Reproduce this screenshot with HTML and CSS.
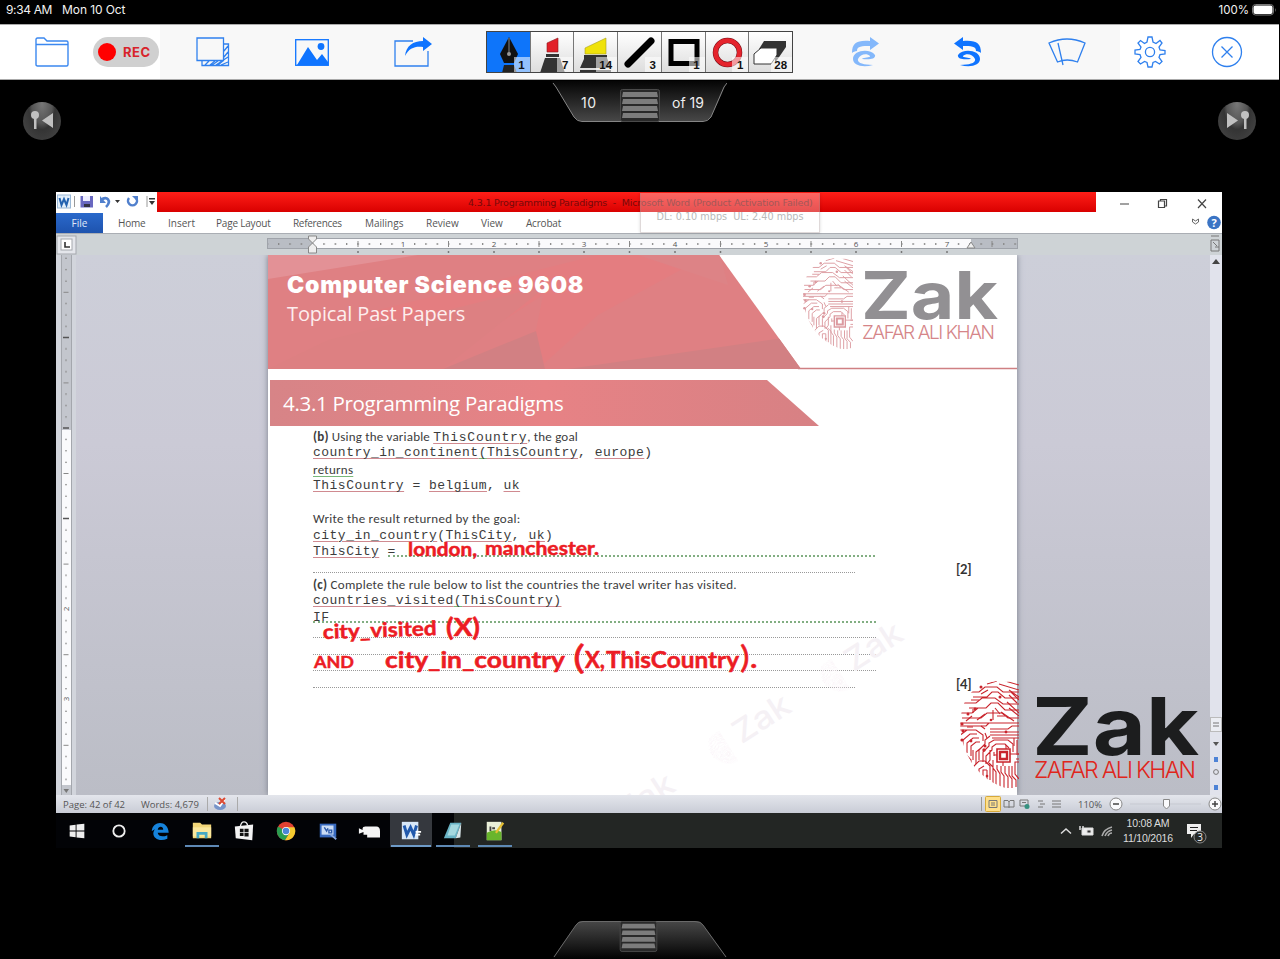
FILE: index.html
```html
<!DOCTYPE html>
<html lang="en">
<head>
<meta charset="utf-8">
<title>Whiteboard</title>
<link rel="stylesheet" href="styles.css">
</head>
<body>
<svg class="defs" width="0" height="0" aria-hidden="true">
  <defs>
    <clipPath id="half"><path d="M60 0 V110 C40 110 20 96 11 80 C2 63 -2 45 4 27 C9 8 30 -2 47 2 Z"/></clipPath>
    <symbol id="print" viewBox="0 0 60 110">
      <g clip-path="url(#half)" fill="none" stroke="currentColor" stroke-width="1.100">
        <path d="M8 12H20L26 7H38L44 12H60M14 17H28L33 12H39L46 18H60M4 23H17L23 18H36L44 24H60M10 28H27L32 23H39L46 30H60M28 4L38 1M40 4L60 10M46 1L60 5M1 33H13L19 28M3 38H22L28 33H43L49 38H60M0 43H60M0 46H27L30 43M31 49H49L53 46H60M31 52H60M31 55H60M33 58H60"/>
        <path d="M1 50H17L24 55V61M0 56L8 50M4 68V60L11 54H18M8 73V63L14 58H20M12 76V66L17 62H21M20 80V70L26 64V60L31 56M24 82V72L30 66V63L35 60H49L54 64V72M27 84V76L33 70V67L37 64H46L50 68M31 70V80L28 84M35 72V76M17 84V72L22 68M2 76L7 80V87M5 72L12 80V92"/>
        <path d="M15 94V86L20 81H26L31 86V100M20 98V89L25 86M24 102V90L28 90M28 102V90M34 106V87L30 83M37 106V92L34 88V80M41 108V94L38 89V85M45 108V96L42 92V86M49 108V97L46 93V86M53 108V99L50 95V86M57 107V100L53 96V86M60 99L56 94V82H60M58 60V73M55 58V66M57 74H60M57 79H60M6 84L30 105M10 84L34 109M3 79L9 85"/>
        <path d="M14 33V29M18 40L26 34M34 40V30M50 15L58 23M48 22L60 33M50 10L60 17M42 32L55 41M7 41L13 36M22 14L29 10M36 28L41 34M12 20L20 20M26 49L22 46M26 53L28 58M38 36H46M50 28L60 36M52 12L60 20M8 47H14M14 70V80"/>
        <path d="M38 69H51V82H38Z" stroke-width="1.600"/><path d="M41 72H48V79H41Z" stroke-width="2.400" fill="#fff"/>
        <path d="M35 75H38M51 74H60M44 82V86M47 65V69"/>
      </g>
      <g fill="currentColor"><circle cx="22" cy="7" r="1.500"/><circle cx="41" cy="17" r="1.500"/><circle cx="3" cy="44" r="1.600"/><circle cx="4" cy="51" r="1.500"/><circle cx="16" cy="29" r="1.400"/><circle cx="3" cy="60" r="1.600"/><circle cx="26" cy="66" r="1.500"/><circle cx="25" cy="70" r="1.700"/><circle cx="47" cy="52" r="1.400"/><circle cx="9" cy="34" r="1.500"/><circle cx="32" cy="40" r="1.300"/><circle cx="12" cy="61" r="1.400"/><circle cx="28" cy="96" r="1.300"/></g>
    </symbol>
    <symbol id="grip" viewBox="0 0 40 33">
      <rect x=".5" y=".5" width="39" height="32" rx="2" fill="#292929" stroke="#4a4a4a"/>
      <path d="M3 3H37L38 8H2ZM3 10H37L38 15H2ZM3 17H37L38 22H2ZM3 24H37L38 29H2Z" fill="#7c7c7c"/>
    </symbol>
  </defs>
</svg>

<header class="status">
  <span class="clock">9:34 AM</span><span class="date">Mon 10 Oct</span>
  <span class="charge">100%</span>
  <svg width="25" height="12" viewBox="0 0 25 12"><rect x=".5" y=".5" width="21" height="10.500" rx="3" fill="none" stroke="#777"/><rect x="1.500" y="1.500" width="19" height="8.500" rx="2" fill="#fff"/><path d="M23 4v4q1.400-2 0-4" fill="#888"/></svg>
</header>

<nav class="toolbar">
  <svg class="i-folder" width="34" height="30" viewBox="0 0 34 30" fill="none" stroke="#3b88f0" stroke-width="1.400"><path d="M1 7V2.500Q1 1 2.500 1H9L12 4H31.500Q33 4 33 5.500V27.500Q33 29 31.500 29H2.500Q1 29 1 27.500ZM1 7.500H33"/></svg>
  <div class="rec"><i></i>REC</div>
  <svg class="i-layers" width="34" height="30" viewBox="0 0 34 30" fill="none" stroke="#2f80ee" stroke-width="1.300"><path d="M27.500 7H32.500V28.500H6V23.500M1 1H27.500V23.500H1ZM28 14L32 9M28 20L32 15M20 28L32 20M14 28L19 24M9 28L13 24M25 28L32 25M16 28L22 24M22 28L28 23"/></svg>
  <svg class="i-image" width="34" height="27" viewBox="0 0 34 27"><rect x=".7" y=".7" width="32.600" height="25.600" fill="none" stroke="#0f74ff" stroke-width="1.300"/><path d="M2 26L13 8L22 21L27 15L33 23V26Z" fill="#0f74ff"/><circle cx="26" cy="7.500" r="3.400" fill="#0f74ff"/></svg>
  <svg class="i-share" width="38" height="30" viewBox="0 0 38 30"><path d="M19 4H1V29H34V14" fill="none" stroke="#2f80ee" stroke-width="1.300"/><path d="M11 19C12 9 19 4 29 4V0L38 7L29 14V10C21 9 15 11 11 19Z" fill="#0f74ff"/></svg>

  <div class="tools">
    <div class="tool on"><svg viewBox="0 0 44 41"><path d="M22 5L31 22L27 31H17L13 22Z" fill="#111"/><path d="M22 6V22" stroke="#888"/><circle cx="22" cy="22" r="2" fill="#999"/><path d="M17 33H27L30 41H15Z" fill="#222"/></svg><b>1</b></div>
    <div class="tool"><svg viewBox="0 0 44 41"><path d="M16 11L27 6V20H16Z" fill="#e22029" stroke="#8c1a20" stroke-width=".6"/><path d="M15 22H28V25H15ZM14 26H29L34 41H9Z" fill="#333"/></svg><b>7</b></div>
    <div class="tool"><svg viewBox="0 0 44 41"><path d="M11 16L32 6V22H11Z" fill="#efe20a" stroke="#a8a020" stroke-width=".6"/><path d="M10 23H33V26L37 36H6L10 27ZM6 38H37V41H6Z" fill="#333"/></svg><b>14</b></div>
    <div class="tool"><svg viewBox="0 0 44 41"><path d="M10 32L33 9" stroke="#000" stroke-width="7" stroke-linecap="round"/></svg><b>3</b></div>
    <div class="tool"><svg viewBox="0 0 44 41"><rect x="9" y="9.500" width="26" height="22" fill="none" stroke="#000" stroke-width="5"/></svg><b>1</b></div>
    <div class="tool"><svg viewBox="0 0 44 41"><circle cx="21.500" cy="20.500" r="12" fill="none" stroke="#701018" stroke-width="5.500"/><circle cx="21.500" cy="20.500" r="12" fill="none" stroke="#e5242d" stroke-width="4.500"/></svg><b>1</b></div>
    <div class="tool"><svg viewBox="0 0 44 41"><path d="M15 9H37V15L26 31V17H10Z" fill="#333"/><path d="M5 22L12 16H28V23L22 32H5Z" fill="#fff" stroke="#333"/></svg><b>28</b></div>
  </div>

  <svg class="i-redo" width="28" height="30" viewBox="0 0 28 30" fill="#84b8fb"><path id="swirl" d="M0 16C0 6 5 3 18 4V0L27 6.500L18 13V9C10 9 5 9 5 14C3 14 1 15 0 16ZM23 18C18 11 1 13 1 22C1 28 10 31 21 28C11 28 5 26 6 22C8 17 15 16 18 19C19 21 12 20 10 22C18 23 24 22 23 18Z"/></svg>
  <svg class="i-undo" width="28" height="30" viewBox="0 0 28 30" fill="#0f74ff"><use href="#swirl" transform="matrix(-1 0 0 1 27 0)"/></svg>
  <svg class="i-wiper" width="38" height="29" viewBox="0 0 38 29" fill="none" stroke="#2f80ee" stroke-width="1.300"><path d="M1 5Q19-3 37 5L29.500 24Q19 20 9.500 24ZM10 5L15 27"/></svg>
  <svg class="i-gear" width="32" height="32" viewBox="0 0 32 32" fill="none" stroke="#2f80ee" stroke-width="1.300"><path d="M14 1H18L19 6L22 7.500L26 4.500L28 7L25 11L26 14L31 14.500V18L26 18.500L25 21.500L28 25.500L25.500 28L21.500 25.500L19 26.500L18 31H14L13 26.500L10.500 25.500L6.500 28L4 25.500L7 21.500L6 18.500L1 18V14L6 13.500L7 11L4 7L6.500 4.500L10.500 7.500L13 6Z"/><circle cx="16" cy="16" r="4.600"/></svg>
  <svg class="i-close" width="32" height="32" viewBox="0 0 32 32" fill="none" stroke="#2f80ee" stroke-width="1.300"><circle cx="16" cy="16" r="14.500"/><path d="M10.500 10.500L21.500 21.500M21.500 10.500L10.500 21.500"/></svg>
</nav>

<main class="stage">
  <div class="pager-row">
    <div class="round"><svg width="38" height="38" viewBox="0 0 38 38" fill="#c0c0c0"><circle cx="12" cy="15" r="4"/><path d="M11 16H13.500V29H11ZM19 20.500L30 13V28Z"/></svg></div>
    <div class="pager">
      <svg class="tab" width="176" height="42" viewBox="0 0 176 42"><defs><linearGradient id="tg" x2="0" y2="1"><stop offset="0" stop-color="#050505"/><stop offset="1" stop-color="#474747"/></linearGradient></defs><path d="M0 1L5 7L23 37Q26 41 31 41H152Q157 41 160 37L174 7L176 1Z" fill="url(#tg)" stroke="none"/><path d="M2 3L5 7L23 37Q26 41.500 31 41.500H152Q157 41.500 160 37L173 7L176 3" fill="none" stroke="#858585"/></svg>
      <span class="cur">10</span><svg class="grip" width="40" height="33"><use href="#grip"/></svg><span class="of">of 19</span>
    </div>
    <div class="round"><svg width="38" height="38" viewBox="0 0 38 38" fill="#c0c0c0"><circle cx="27" cy="15" r="4"/><path d="M26 16H28.500V29H26ZM20 20.500L9 13V28Z"/></svg></div>
  </div>

  <section class="screen">
    <div class="titlebar">
      <div class="quick">
        <svg width="101" height="20" viewBox="0 0 101 20"><rect x="1.500" y="3" width="13" height="13" fill="#e3effa" stroke="#9ab8d6"/><path d="M3.500 6L5.500 13L8 7L10.500 13L12.500 6" fill="none" stroke="#2463b0" stroke-width="2"/><path d="M18.500 4V15M91 4V15" stroke="#999"/><path d="M24.500 4H37V15.500H24.500Z" fill="#6968c0"/><path d="M27 4H34V9H27Z" fill="#eef"/><path d="M28 12H34V15H28Z" fill="#334"/><path d="M45 8C51 3 56 9 50 15" fill="none" stroke="#5180cd" stroke-width="2.600"/><path d="M44 4V11H50Z" fill="#5180cd"/><path d="M59 8H64L61.500 11ZM93 9H99L96 13ZM93 6H99V7.500H93Z" fill="#333"/><path d="M73 6A4.500 4.500 0 1 0 80 6" fill="none" stroke="#5180cd" stroke-width="2.500"/><path d="M76 4H82V10Z" fill="#5180cd"/></svg>
      </div>
      <div class="red"><span>4.3.1 Programming Paradigms &nbsp;- &nbsp;Microsoft Word (Product Activation Failed)</span></div>
      <div class="winbtns"><svg width="126" height="20" viewBox="0 0 126 20" fill="none" stroke="#444" stroke-width="1.200"><path d="M24 12H33M102 7.500L110 16M110 7.500L102 16"/><path d="M62.500 9H68.500V15.500H62.500ZM64.500 9V7.500H70.500V14H68.500"/></svg></div>
    </div>
    <div class="ribbon">
      <span class="file">File</span>
      <span class="t1">Home</span><span class="t2">Insert</span><span class="t3">Page Layout</span><span class="t4">References</span><span class="t5">Mailings</span><span class="t6">Review</span><span class="t7">View</span><span class="t8">Acrobat</span>
      <svg class="help" width="32" height="21" viewBox="0 0 32 21"><path d="M2.500 7L5.500 9L8.500 7V10L5.500 12L2.500 10Z" fill="none" stroke="#666"/><circle cx="24" cy="10.500" r="6.800" fill="#3b74c4"/><text x="24" y="14.500" fill="#fff" font-size="11" font-weight="700" text-anchor="middle">?</text></svg>
    </div>
    <div class="speed">DL: 0.10 mbps&nbsp; UL: 2.40 mbps</div>

    <div class="rulerbar">
      <svg width="1166" height="22" viewBox="0 0 1166 22">
        <defs><pattern id="tick" x="256" y="0" width="11.330" height="14" patternUnits="userSpaceOnUse"><rect x="0" y="10" width="1.300" height="2" fill="#888"/></pattern></defs>
        <path d="M0 0.500H1166" stroke="#aaaeb4"/>
        <rect x="1" y="3" width="19" height="18" fill="#e4e6eb" stroke="#a4a7ad"/><rect x="5" y="6" width="11" height="11" fill="#fff" stroke="#a4a7ad"/><path d="M9 9V14H14" fill="none" stroke="#333" stroke-width="1.600"/>
        <rect x="211.500" y="5.500" width="750" height="10" fill="#b9bdc4" stroke="#9fa3aa"/><rect x="256" y="6" width="659" height="9" fill="#fafafc"/>
        <rect x="212" y="0" width="749" height="14" fill="url(#tick)"/>
        <path d="M302 8V14M392.500 8V14M483 8V14M573.500 8V14M664.500 8V14M755 8V14M845.500 8V14M936 8V14" stroke="#888"/>
        <g font-size="8" fill="#555" text-anchor="middle"><rect x="344" y="8" width="6" height="6" fill="#fafafc"/><text x="347" y="14">1</text><rect x="435" y="8" width="6" height="6" fill="#fafafc"/><text x="438" y="14">2</text><rect x="525" y="8" width="6" height="6" fill="#fafafc"/><text x="528" y="14">3</text><rect x="616" y="8" width="6" height="6" fill="#fafafc"/><text x="619" y="14">4</text><rect x="707" y="8" width="6" height="6" fill="#fafafc"/><text x="710" y="14">5</text><rect x="797" y="8" width="6" height="6" fill="#fafafc"/><text x="800" y="14">6</text><rect x="888" y="8" width="6" height="6" fill="#fafafc"/><text x="891" y="14">7</text></g>
        <path d="M302 18V20M347 18V20M392.500 18V20M438 18V20M483 18V20M528 18V20M573.500 18V20M619 18V20M664.500 18V20M710 18V20M755 18V20M800 18V20M845.500 18V20M891 18V20" stroke="#777" stroke-width="1.500"/>
        <path d="M252.500 3H260.500V6L256.500 10L252.500 6ZM256.500 10L260.500 14V20H252.500V14ZM911 15L915 9L919 15Z" fill="#eee" stroke="#888"/>
        <path d="M1155 3H1163M1155 7H1163V18H1155ZM1157 9L1161 13M1159 14H1163" fill="none" stroke="#777"/>
      </svg>
    </div>

    <div class="workspace">
      <svg class="vruler" width="20" height="540" viewBox="0 0 20 540">
        <defs><pattern id="vt" y="-8" width="20" height="90.600" patternUnits="userSpaceOnUse"><path d="M9 11.300H11M9 22.600H11M9 34H11M7.500 45.300H12.500M9 56.600H11M9 68H11M9 79.300H11" stroke="#888"/></pattern></defs>
        <rect x="5.500" y="-1" width="10" height="542" fill="#c3c6cd" stroke="#a4a7ad"/><rect x="6" y="175" width="9" height="355" fill="#fafafc"/><rect width="20" height="530" fill="url(#vt)"/>
        <path d="M7 82.500H13M7 173H13M7 263.500H13" stroke="#555" stroke-width="1.400"/>
        <g font-size="8" fill="#555" text-anchor="middle"><text transform="translate(13 354) rotate(-90)">2</text><text transform="translate(13 444) rotate(-90)">3</text></g><path d="M7.500 534H13L10.300 538Z" fill="#777"/>
      </svg>

      <article class="page">
        <header class="banner">
          <svg class="art" width="749" height="115" viewBox="0 0 749 115"><defs><clipPath id="bc"><path d="M0 0H451L533 114H0Z"/></clipPath></defs>
            <g clip-path="url(#bc)"><rect width="540" height="115" fill="#df8083"/><path d="M0 0H150L0 24Z" fill="#e39196"/><path d="M90 60L330 0H440L330 60L270 114H210L268 75L275 40L160 114H90L200 70Z" fill="#e47d80"/><path d="M0 114L60 85L280 30L175 114Z" fill="#dd8082"/><path d="M175 114L268 76L277 114Z" fill="#d28083"/><path d="M300 114L515 83L540 114Z" fill="#d28083"/><path d="M330 0H370L460 30L452 0Z" fill="#dd8386"/></g>
            <path d="M530 113.500H749" stroke="#cf8083" stroke-width="1.500"/></svg>
          <div class="heads"><h1>Computer Science 9608</h1><p>Topical Past Papers</p></div>
          <svg class="logo" width="197" height="95" viewBox="0 0 197 95"><use href="#print" width="51" height="94" color="#dc9aa0"/><text x="59" y="62" class="zak" font-size="66" textLength="137" lengthAdjust="spacingAndGlyphs" fill="#929093">Zak</text><text x="60" y="81.500" class="zname" font-size="19" textLength="133" lengthAdjust="spacing" fill="#d58588">ZAFAR ALI KHAN</text></svg>
        </header>
        <h2><span>4.3.1 Programming Paradigms</span></h2>
        <div class="body">
          <p class="s l1"><b>(b)</b> Using the variable <code><u>ThisCountry</u></code>, the goal</p>
          <p class="m"><u>country_in_continent</u><u class="g">(</u><u>ThisCountry</u>, <u>europe</u>)</p>
          <p class="s"><u class="g">returns</u></p>
          <p class="m"><u>ThisCountry</u> = <u>belgium</u>, <u>uk</u></p>
          <p class="s">&nbsp;</p>
          <p class="s l2">Write the result returned by the goal:</p>
          <p class="m"><u>city_in_country</u>(<u>ThisCity</u>, <u>uk</u>)</p>
          <p class="m row"><u>ThisCity</u>&nbsp;<span class="rule green w1">=</span></p>
          <p class="row"><span class="rule short"></span></p>
          <p class="s l3"><b>(c)</b> Complete the rule below to list the countries the travel writer has visited.</p>
          <p class="m"><u>countries_visited</u><u class="g">(</u><u>ThisCountry)</u></p>
          <p class="m row"><span class="rule green w2">IF</span></p>
          <p class="row"><span class="rule"></span></p>
          <p class="row"><span class="rule"></span></p>
          <p class="row"><span class="rule"></span></p>
          <p class="row"><span class="rule short"></span></p>
        </div>
        <b class="mark two">[2]</b><b class="mark four">[4]</b>
        <svg class="ink" width="749" height="540" viewBox="0 0 749 540">
          <g class="wm" fill="#f5f1f5" color="#faf3f7"><g transform="translate(442 498) rotate(-33)"><use href="#print" width="20" height="38" y="-15"/><text x="31" y="10" font-size="32" textLength="62" lengthAdjust="spacingAndGlyphs">Zak</text></g><g transform="translate(554 426) rotate(-33)"><use href="#print" width="20" height="38" y="-15"/><text x="31" y="10" font-size="32" textLength="62" lengthAdjust="spacingAndGlyphs">Zak</text></g><g transform="translate(326 577) rotate(-33)"><text x="31" y="10" font-size="32" textLength="62" lengthAdjust="spacingAndGlyphs">Zak</text></g></g>
          <g class="pen">
            <text x="140" y="301" font-size="18" textLength="69" lengthAdjust="spacingAndGlyphs">london,</text><text x="217" y="300" font-size="18" textLength="114" lengthAdjust="spacingAndGlyphs">manchester.</text>
            <text x="55" y="384" font-size="20" textLength="114" lengthAdjust="spacingAndGlyphs" transform="rotate(-2 55 384)">city_visited</text><text x="178" y="381" font-size="24" textLength="34" lengthAdjust="spacingAndGlyphs">(X)</text>
            <text x="46" y="413" font-size="17" textLength="40" lengthAdjust="spacingAndGlyphs">AND</text><text x="117" y="413" font-size="22" textLength="180" lengthAdjust="spacingAndGlyphs">city_in_country</text>
            <text x="305" y="414" font-size="33" class="thin" textLength="12" lengthAdjust="spacingAndGlyphs">(</text><text x="317" y="413" font-size="23" textLength="20" lengthAdjust="spacingAndGlyphs">X,</text><text x="338" y="413" font-size="23" textLength="133" lengthAdjust="spacingAndGlyphs">ThisCountry</text><text x="472" y="413" font-size="30" class="thin" textLength="18" lengthAdjust="spacingAndGlyphs">).</text>
          </g>
        </svg>
      </article>
      <svg class="logo-big" width="242" height="111" viewBox="0 0 242 111"><use href="#print" width="60" height="110" color="#c9252d"/><text x="73" y="75" class="zak" font-size="80" textLength="167" lengthAdjust="spacingAndGlyphs" fill="#1c1d1e">Zak</text><text x="75" y="98" class="zname" font-size="23" textLength="162" lengthAdjust="spacing" fill="#e0261c">ZAFAR ALI KHAN</text></svg>
      <div class="scroll"><svg width="12" height="540" viewBox="0 0 12 540"><path d="M2 9L6 4L10 9Z" fill="#444"/><rect x=".5" y="462.500" width="11" height="14" fill="#eceef3" stroke="#bbb"/><path d="M3 468H9M3 471H9" stroke="#777"/><path d="M3 487H9L6 491Z" fill="#555"/><g fill="#4d83d6"><rect x="4" y="502" width="4" height="5"/><rect x="4" y="530" width="4" height="5"/></g><circle cx="6" cy="517" r="2.400" fill="none" stroke="#777"/></svg></div>
    </div>

    <footer class="wordbar">
      <span class="wp">Page: 42 of 42</span><span class="ww">Words: 4,679</span>
      <svg width="36" height="18" viewBox="0 0 36 18"><path d="M.5 2V16M30.500 2V16" stroke="#aaa"/><ellipse cx="13" cy="11" rx="6" ry="4" fill="#7694c9"/><path d="M8 8L13 11L18 4" stroke="#fff" stroke-width="2" fill="none"/><path d="M12 3L18 9M18 3L12 9" stroke="#dd4a32" stroke-width="2"/></svg>
      <svg class="views" width="90" height="18" viewBox="0 0 90 18"><path d="M.5 2V16" stroke="#999"/><rect x="4.500" y="1.500" width="15" height="15" rx="1" fill="#ffe08a" stroke="#d6a93a"/><path d="M8 5.500H16V12.500H8ZM10 8H14M10 10H14M23 5.500H27L28 7L29 5.500H33V12H23ZM28 7V13M39 5H47V11H39ZM41 7.500H45M57 6H62M59 9H64M57 12H62M71 6H80M71 9H80M71 12H80" fill="none" stroke="#777"/><circle cx="46" cy="11.500" r="2.500" fill="#369180"/></svg>
      <span class="pct">110%</span>
      <svg width="116" height="18" viewBox="0 0 116 18" fill="#fafafc" stroke="#888"><path d="M24 9H95" stroke="#c6c9d1"/><circle cx="10" cy="9" r="6"/><path d="M7 9H13" stroke="#444" stroke-width="1.500"/><path d="M57.500 4.500H63.500V11L60.500 14L57.500 11Z"/><circle cx="109" cy="9" r="6"/><path d="M106 9H112M109 6V12" stroke="#444" stroke-width="1.500"/></svg>
    </footer>

    <div class="taskbar">
      <i><svg viewBox="0 0 24 24"><path d="M4 6L10.500 5.200V11.500H4ZM11.500 5L20 4V11.500H11.500ZM4 12.500H10.500V18.800L4 18ZM11.500 12.500H20V20L11.500 19Z" fill="#eee"/></svg></i>
      <i><svg viewBox="0 0 24 24"><circle cx="12" cy="12" r="6.200" fill="none" stroke="#eee" stroke-width="2"/></svg></i>
      <i><svg viewBox="0 0 24 24"><path d="M3 12C4 0 21 0 21.500 14H9.500C10 18 15 19 20 16.500V20.500C9 25 1 17 6.500 10C5 10.500 4 11.500 3 12ZM9.500 10.500H15.500C15.500 6 10 6.500 9.500 10.500Z" fill="#1683db"/></svg></i>
      <i class="run"><svg viewBox="0 0 24 24"><path d="M2 3H10L12 5H22V20H2Z" fill="#f3d778"/><path d="M2 8H22V18H2Z" fill="#fbe89d"/><path d="M6 20V13H18V20H15V16H9V20Z" fill="#46a9c4"/></svg></i>
      <i><svg viewBox="0 0 24 24"><path d="M2 7L22 5L21 22L3 20Z" fill="#f3f3f3"/><path d="M8 7Q9 2 12 2Q15 2 16 6" fill="none" stroke="#eee" stroke-width="1.500"/><path d="M7.500 9.500H11.500V13H7.500ZM12.500 9.500H17V13H12.500ZM7.500 14H11.500V17.500H7.500ZM12.500 14H17V18H12.500Z" fill="#111"/></svg></i>
      <i><svg viewBox="0 0 24 24"><circle cx="12" cy="12" r="10" fill="#e04132"/><path d="M12 12L3.300 7.100A10 10 0 0 0 11 22L16 14Z" fill="#2a9d50"/><path d="M12 12L16 14L11 22A10 10 0 0 0 21.200 8H12Z" fill="#f6cb2f"/><circle cx="12" cy="12" r="4.500" fill="#fff"/><circle cx="12" cy="12" r="3.600" fill="#4c86d8"/></svg></i>
      <i><svg viewBox="0 0 24 24"><path d="M3 4H21V19H3Z" fill="#3769be"/><path d="M5 6H18V16H5Z" fill="#cadcf5"/><path d="M8 8L10.500 12L12 9M13 11H16V14H13Z" fill="none" stroke="#2b59aa" stroke-width="1.500"/><path d="M15 16L21 21" stroke="#88a7dc" stroke-width="2"/></svg></i>
      <i><svg viewBox="0 0 24 24"><path d="M1 9L5 11V9Q5 7 8 7H20Q24 7 24 12V19H10V16H6V13L1 15Z" fill="#f5f5f5"/></svg></i>
      <i class="run active"><svg viewBox="0 0 24 24"><path d="M2 2H20V21H2Z" fill="#d8e7f7"/><path d="M4.500 6L7.500 16L11.500 8L15 16L18 6" fill="none" stroke="#2159ad" stroke-width="3.200"/><path d="M17 13H23M17 16H22" stroke="#fff" stroke-width="2"/></svg></i>
      <i class="run"><svg viewBox="0 0 24 24"><path d="M9 3H21L15 20H2Z" fill="#69b3c5"/><path d="M10 5H19L14 17H6Z" fill="#a5d8df"/><path d="M21 3L20 19L15 20Z" fill="#d9e6e9"/></svg></i>
      <i class="run"><svg viewBox="0 0 24 24"><path d="M3 2H19V22H3Z" fill="#e9efd8"/><path d="M3 14Q11 9 19 13V22H3Z" fill="#69b52c"/><path d="M7 7V12M9 9H12" stroke="#444" stroke-width="2"/><path d="M21 3L13 14" stroke="#e4bf34" stroke-width="2.500"/></svg></i>
      <svg class="tray" width="62" height="20" viewBox="0 0 62 20" fill="none" stroke="#ddd"><path d="M5 12.500L10 8L15 12.500" stroke-width="1.500"/><path d="M26 7H37V14H26Z" fill="#eee"/><path d="M31 9H35V12H31Z" fill="#333"/><path d="M24 5V9M27 5V9" stroke-width="1.500"/><path d="M46 15Q48 8 56 6M49 15Q51 10 56 9M52 15Q53 12 56 12" stroke="#aaa" stroke-width="1.600"/></svg>
      <div class="time"><span>10:08 AM</span><span>11/10/2016</span></div>
      <svg class="note" width="24" height="24" viewBox="0 0 24 24"><path d="M1 3H15V13H8L5 17V13H1Z" fill="#eee"/><path d="M4 6.500H12M4 9.500H11" stroke="#222"/><circle cx="14" cy="16" r="6" fill="#252826" stroke="#888"/><text x="14" y="19.500" font-size="10" fill="#eee" text-anchor="middle">3</text></svg>
    </div>
  </section>

  <div class="bottom"><svg width="176" height="39" viewBox="0 0 176 39"><defs><linearGradient id="bg" x2="0" y2="1"><stop offset="0" stop-color="#484848"/><stop offset="1" stop-color="#020202"/></linearGradient></defs><path d="M0 39L24 5Q26 1 31 1H143Q149 1 151 5L176 39Z" fill="url(#bg)"/><path d="M2 37L24 5Q26 1.500 31 1.500H143Q149 1.500 151 5L174 37" fill="none" stroke="#6a6a6a"/><use href="#grip" x="66.500" y="1" width="40" height="31"/></svg></div>
</main>
</body>
</html>
```

FILE: styles.css
```css
* { box-sizing: border-box; }
body { margin: 0; width: 1280px; height: 959px; overflow: hidden; background: #000; font-family: Inter, "Liberation Sans", sans-serif; display: flex; flex-direction: column; }
svg { display: block; flex: none; }
.defs { position: absolute; }
p, h1, h2 { margin: 0; }

.status { height: 24px; flex: none; display: flex; align-items: center; padding: 0 3px 5px 6px; color: #f2f2f2; font-size: 12px; letter-spacing: 0; }
.date { margin-left: 10px; letter-spacing: -.1px; }
.clock { letter-spacing: -.35px; }
.charge { margin-left: auto; margin-right: 3px; font-size: 11.500px; }

.toolbar { height: 56px; flex: none; width: 1279px; display: flex; align-items: center; padding-left: 35px; border-top: 1px solid #aaa; border-bottom: 1px solid #aaa; background: linear-gradient(90deg, #fff 160px, #f8f8f8 160px, #f8f8f8 1120px, #fff 1120px); }
.rec { width: 66px; height: 30px; margin-left: 24px; border-radius: 15px; background: #d0d0d0; display: flex; align-items: center; padding-left: 5px; gap: 7px; color: #d8232a; font: 700 13px Inter, sans-serif; letter-spacing: .5px; }
.rec i { width: 18px; height: 18px; border-radius: 50%; background: #f00; }
.i-layers { margin-left: 37px; }
.i-image { margin-left: 65px; }
.i-share { margin-left: 65px; }
.tools { display: flex; width: 307px; height: 42px; margin-left: 54px; border: 1px solid #444; }
.tool { flex: 1; position: relative; border-right: 1px solid #777; background: linear-gradient(#fff, #ddd); overflow: hidden; }
.tool:last-child { border-right: 0; }
.tool svg { width: 44px; height: 41px; }
.tool.on { background: #0e75fa; }
.tool b { position: absolute; right: 0; bottom: 0; min-width: 16px; height: 15px; padding: 0 5px 0 3px; font: 700 11.500px/16px "Liberation Sans", sans-serif; text-align: right; color: #111; background: rgba(255, 255, 255, .55); }
.i-redo { margin-left: 59px; }
.i-undo { margin-left: 74px; }
.i-wiper { margin-left: 66px; }
.i-gear { margin-left: 48px; }
.i-close { margin-left: 45px; }

.stage { flex: 1; display: flex; flex-direction: column; }
.pager-row { height: 112px; flex: none; display: flex; justify-content: space-between; padding: 0 24px 0 23px; }
.round { width: 38px; height: 38px; margin-top: 22px; border-radius: 50%; background: radial-gradient(ellipse at 50% 5%, #777 0, #555 38%, #343434 50%, #494949 100%); }
.round svg { margin-top: -2px; }
.pager { position: relative; width: 176px; height: 42px; margin: 0 1px 0 0; display: flex; align-items: center; color: #eee; font-size: 14px; padding: 2px 0 0 30px; }
.pager .tab { position: absolute; left: 0; top: 0; }
.pager span, .grip { position: relative; }
.cur { width: 39px; letter-spacing: .5px; }
.of { margin-left: 12px; }
.grip { margin-top: 6px; }

.screen { position: relative; width: 1166px; height: 656px; margin-left: 56px; flex: none; display: flex; flex-direction: column; background: #fff; font-family: "Open Sans", "Noto Sans", sans-serif; }
.titlebar { height: 20px; flex: none; display: flex; }
.red { flex: 1; background: linear-gradient(#ff1e18, #d90000); color: #76090a; font: 9.500px/21px "DejaVu Sans", sans-serif; white-space: nowrap; padding-left: 311px; }
.red span { letter-spacing: -.18px; }
.ribbon { height: 21px; flex: none; display: flex; align-items: center; font-size: 10px; color: #555; position: relative; white-space: nowrap; }
.file { width: 47px; height: 20px; margin-top: 1px; background: linear-gradient(#2a69cb, #1e53ae); color: #e0e9f8; text-align: center; line-height: 20px; }
.ribbon span:not(.file) { flex: none; }
.ribbon .t1 { letter-spacing: -.2px; }
.ribbon .t3 { letter-spacing: -.2px; }
.ribbon .t4 { letter-spacing: -.3px; }
.t1 { margin-left: 15px; width: 50px; }
.t2 { width: 48px; }
.t3 { width: 77px; }
.t4 { width: 72px; }
.t5 { width: 61px; }
.t6 { width: 55px; }
.t7 { width: 45px; }
.t8 { letter-spacing: -.2px; }
.help { margin-left: auto; font-family: "Open Sans", sans-serif; }
.speed { position: absolute; left: 584px; top: 1px; width: 180px; height: 40px; padding-top: 17px; font: 9.700px/14px "DejaVu Sans", sans-serif; color: #b9b9b9; text-align: center; background: rgba(255, 255, 255, .32); border: 1px solid rgba(150, 130, 130, .3); border-top: 0; box-shadow: 0 0 3px rgba(0, 0, 0, .15); white-space: nowrap; }
.rulerbar { height: 22px; flex: none; background: #ced3d6; }

.workspace { position: relative; height: 540px; flex: none; display: flex; background: linear-gradient(#cdcfd9, #cbcad6 35%, #bbbdc6); overflow: hidden; }
.vruler { background: #d2d5dc; margin-right: 192px; }
.page { position: relative; width: 749px; height: 540px; background: #fff; box-shadow: 0 0 6px #777c88; }
.banner { position: relative; height: 115px; display: flex; justify-content: space-between; }
.art { position: absolute; left: 0; top: 0; }
.heads { position: relative; padding: 15px 0 0 19px; color: #fff; white-space: nowrap; }
.heads h1 { font: 900 23px/30px Inter, sans-serif; letter-spacing: .78px; }
.heads p { font: 400 20px/28px "Open Sans", sans-serif; letter-spacing: -.13px; color: #fdeeee; }
.logo { position: relative; margin: 2px 18px 0 0; }
.zak { font-family: Inter, sans-serif; font-weight: 700; }
.zname { font-family: Inter, sans-serif; font-weight: 300; }
h2 { height: 46px; width: 549px; margin: 10px 0 0 2px; padding-left: 13px; background: linear-gradient(90deg, #d78487, #e78285 50%, #d78184); clip-path: polygon(0 0, 497px 0, 100% 100%, 0 100%); color: #fff; font: 400 20.500px/46px "Open Sans", sans-serif; letter-spacing: -.3px; white-space: nowrap; }
.body { padding: 3px 0 0 45px; color: #3c3c3c; }
.body p { height: 16.450px; line-height: 16.450px; white-space: pre; }
.s { font-family: Carlito, Lato, sans-serif; font-size: 13px; letter-spacing: .27px; }
.s.l1 { letter-spacing: .19px; }
.m, code { font-family: "Liberation Mono", monospace; font-size: 13px; letter-spacing: .48px; }
code { letter-spacing: .75px; }
.body u { text-decoration: underline solid #d08a90 1px; text-underline-offset: 2px; }
.body u.g { text-decoration-color: #78b878; }
.row { display: flex; }
.rule { display: block; height: 12px; width: 563px; border-bottom: 1.500px dotted #999; }
.rule.short { width: 542px; }
.rule.green { height: 13px; line-height: 16px; border-bottom: 2px dotted #82ae82; }
.rule.w1 { width: 487px; }
.rule.w2 { width: 563px; }
.mark { position: absolute; left: 688px; font: 700 13px/16px Lato, sans-serif; color: #333; }
.two { top: 306px; }
.four { top: 421px; }
.ink { position: absolute; left: 0; top: 0; }
.pen { fill: #ec1c24; stroke: #ec1c24; stroke-width: .5px; stroke-linejoin: round; font-family: Lato, sans-serif; font-weight: 700; }
.thin { font-weight: 400; }
.wm { font-family: Inter, sans-serif; font-weight: 500; }
.logo-big { position: absolute; left: 903px; top: 425px; }
.scroll { width: 12px; margin-left: auto; background: #e1e3ec; }

.wordbar { height: 18px; flex: none; display: flex; align-items: center; padding-left: 7px; font-size: 9.500px; color: #555; background: linear-gradient(#e4e6ec, #c9ccd6); white-space: nowrap; }
.wp { width: 78px; }
.ww { width: 66px; }
.views { margin-left: auto; }
.pct { width: 28px; margin-left: 7px; }

.taskbar { height: 35px; flex: none; display: flex; background: linear-gradient(90deg, #020306 398px, #232624 398px); color: #ddd; }
.taskbar > i { width: 41.800px; height: 34px; display: flex; align-items: center; justify-content: center; border-bottom: 2px solid transparent; }
.taskbar > i svg { width: 22px; height: 22px; margin-top: 3px; }
.taskbar > i.run { background: linear-gradient(#5e89b5, #5e89b5) bottom / 34px 2px no-repeat border-box; }
.taskbar > i.active { background: linear-gradient(#6e9bc8, #6e9bc8) bottom / 40px 2px no-repeat border-box, #35383e; }
.tray { margin: 8px 0 0 auto; }
.time { width: 60px; display: flex; flex-direction: column; align-items: center; font: 10.500px/15px "Liberation Sans", sans-serif; letter-spacing: -.2px; padding-top: 3px; }
.note { margin: 8px 12px 0 8px; }

.bottom { flex: 1; display: flex; align-items: flex-end; padding-left: 552px; }
```
